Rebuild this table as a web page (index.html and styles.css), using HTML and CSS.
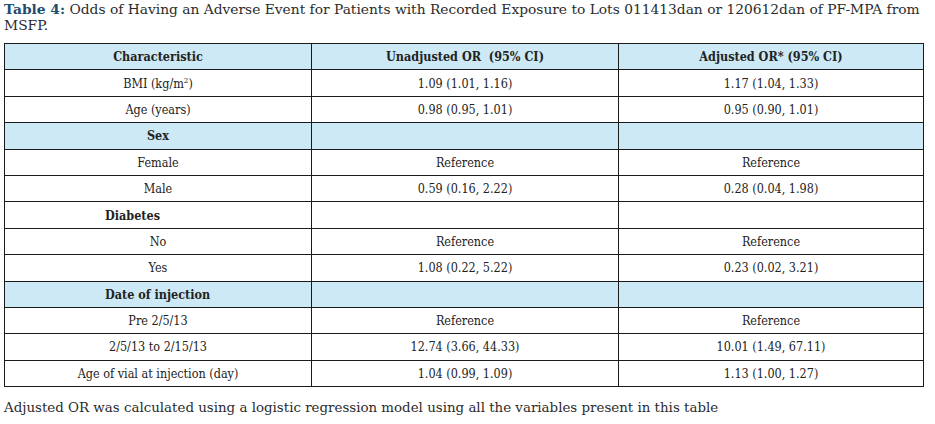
FILE: index.html
```html
<!DOCTYPE html>
<html>
<head>
<meta charset="utf-8">
<link rel="stylesheet" href="styles.css">
</head>
<body>
<div class="page">
  <p class="title"><span class="label">Table 4:</span> Odds of Having an Adverse Event for Patients with Recorded Exposure to Lots 011413dan or 120612dan of PF-MPA from MSFP.</p>
  <table class="odds">
    <tr class="head"><th>Characteristic</th><th>Unadjusted OR&nbsp; (95% CI)</th><th>Adjusted OR* (95% CI)</th></tr>
    <tr><td>BMI (kg/m<sup>2</sup>)</td><td>1.09 (1.01, 1.16)</td><td>1.17 (1.04, 1.33)</td></tr>
    <tr><td>Age (years)</td><td>0.98 (0.95, 1.01)</td><td>0.95 (0.90, 1.01)</td></tr>
    <tr class="group shaded"><th class="sex">Sex</th><td></td><td></td></tr>
    <tr><td>Female</td><td>Reference</td><td>Reference</td></tr>
    <tr><td>Male</td><td>0.59 (0.16, 2.22)</td><td>0.28 (0.04, 1.98)</td></tr>
    <tr class="group"><th>Diabetes</th><td></td><td></td></tr>
    <tr><td>No</td><td>Reference</td><td>Reference</td></tr>
    <tr><td>Yes</td><td>1.08 (0.22, 5.22)</td><td>0.23 (0.02, 3.21)</td></tr>
    <tr class="group shaded"><th>Date of injection</th><td></td><td></td></tr>
    <tr><td>Pre 2/5/13</td><td>Reference</td><td>Reference</td></tr>
    <tr><td>2/5/13 to 2/15/13</td><td>12.74 (3.66, 44.33)</td><td>10.01 (1.49, 67.11)</td></tr>
    <tr><td>Age of vial at injection (day)</td><td>1.04 (0.99, 1.09)</td><td>1.13 (1.00, 1.27)</td></tr>
  </table>
  <p class="note">Adjusted OR was calculated using a logistic regression model using all the variables present in this table</p>
</div>
</body>
</html>
```

FILE: styles.css
```css
html, body {
  margin: 0;
  padding: 0;
  background: #ffffff;
}
.page {
  padding: 0 10px 0 4px;
  color: #222222;
}
.title {
  margin: 0;
  padding-top: 1px;
  font-family: "DejaVu Serif", serif;
  font-size: 13.8px;
  line-height: 16px;
  color: #2b2b2b;
}
.label {
  font-weight: bold;
  color: #1f4d6e;
}
.odds {
  margin-top: 10px;
  width: 920px;
  border-collapse: collapse;
  table-layout: fixed;
  font-family: "DejaVu Serif Condensed", "DejaVu Serif", serif;
  font-size: 12.5px;
  color: #222222;
}
.odds th, .odds td {
  border: 1px solid #1a1a1a;
  height: 25.4px;
  padding: 0 4px;
  text-align: center;
  vertical-align: middle;
  font-weight: normal;
}
.odds th {
  font-weight: bold;
}
.odds tr > :first-child {
  width: 298px;
}
.odds tr > :nth-child(2) {
  width: 298px;
}
.head, .shaded {
  background: #cce9f5;
}
.group th {
  text-align: left;
  padding-left: 100px;
}
.group th.sex {
  padding-left: 142px;
}
sup {
  font-size: 8px;
  line-height: 0;
}
.note {
  margin: 13px 0 0;
  font-family: "DejaVu Serif", serif;
  font-size: 13.4px;
  color: #2b2b2b;
}
```
